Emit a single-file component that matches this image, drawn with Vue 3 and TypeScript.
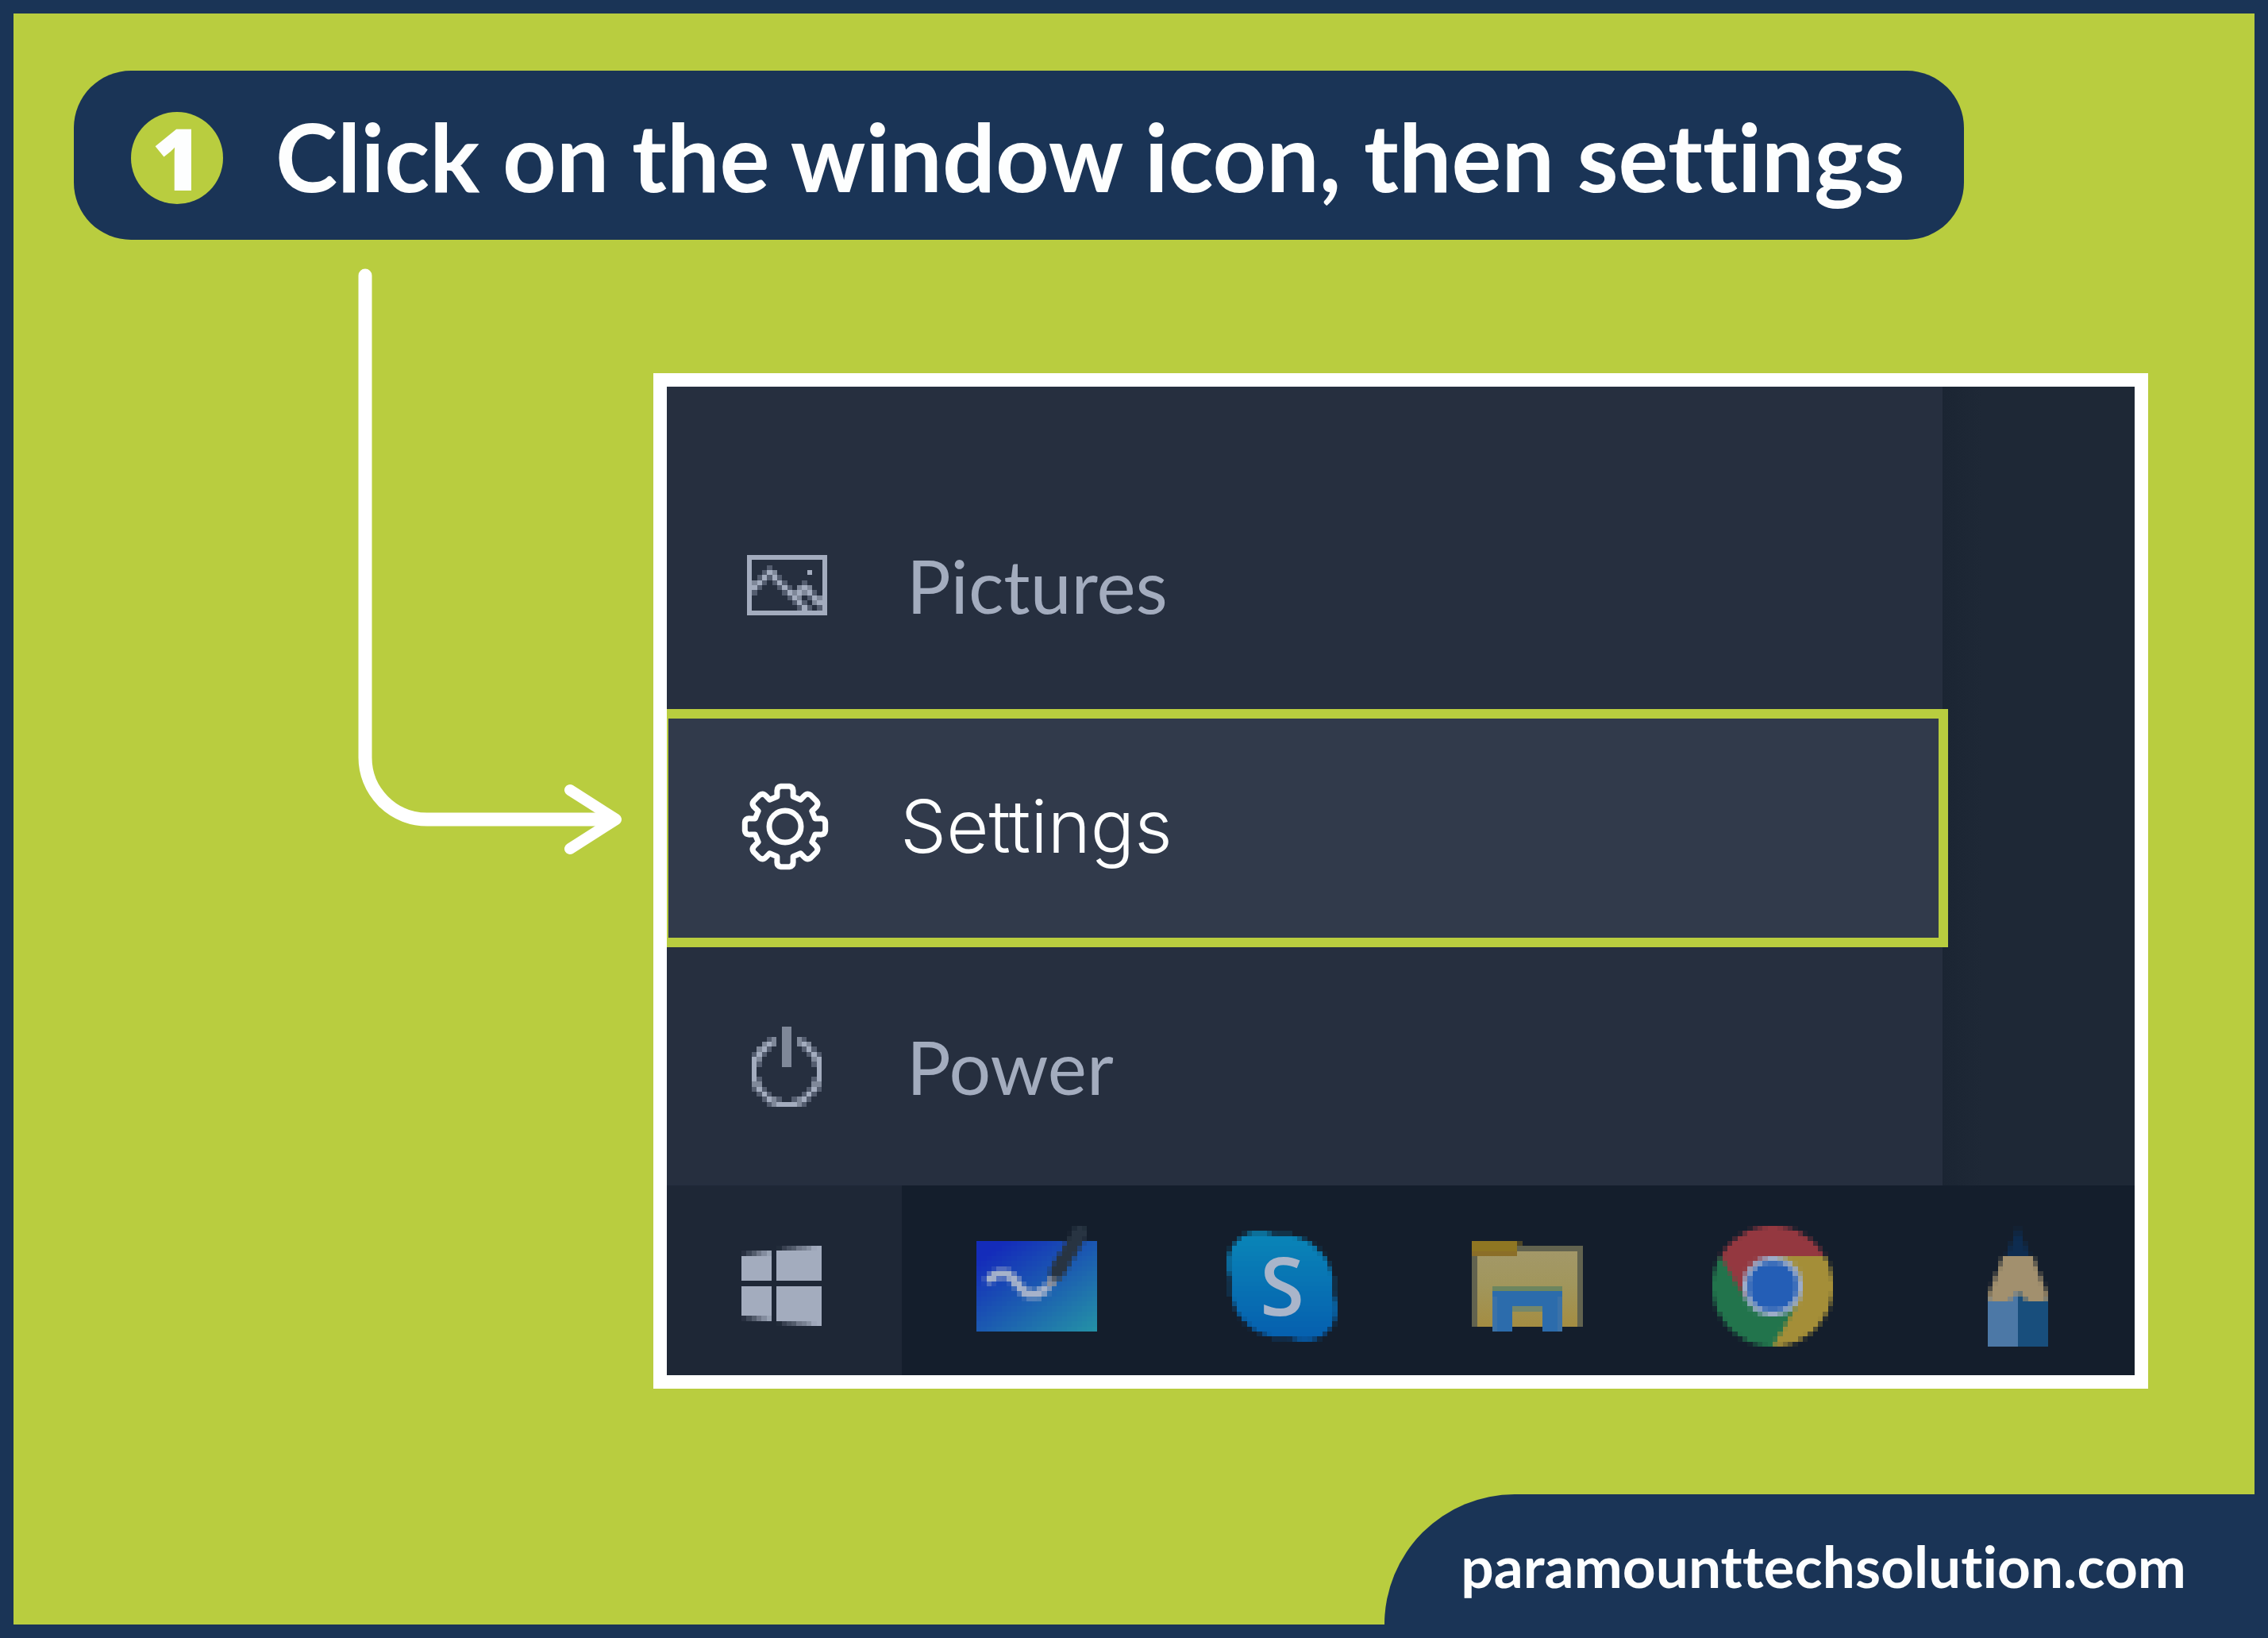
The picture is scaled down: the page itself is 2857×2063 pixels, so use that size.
<script setup lang="ts">
type Rgb = [number, number, number]
type Point = [number, number]
interface Cell { x: number; y: number; fill: string }

/* Turns rows of digits into cells; 3 is the full tone, 1 the faintest. */
function fromRows(rows: string[]): Cell[] {
  const tones: Record<string, string> = { '1': '#545d6f', '2': '#7f8899', '3': '#a3acbe' }
  return rows.flatMap((row, y) =>
    [...row].flatMap((tone, x) => (tones[tone] ? [{ x, y, fill: tones[tone] }] : [])),
  )
}

/* Samples a shape onto a coarse grid, so edges fade as in a small bitmap icon. */
function rasterize(size: number, paint: (x: number, y: number) => Rgb | null): Cell[] {
  const cells: Cell[] = []
  const steps = 5
  for (let y = 0; y < size; y++) {
    for (let x = 0; x < size; x++) {
      let hits = 0
      const sum: Rgb = [0, 0, 0]
      for (let j = 0; j < steps; j++) {
        for (let i = 0; i < steps; i++) {
          const c = paint(x + (i + 0.5) / steps, y + (j + 0.5) / steps)
          if (!c) continue
          hits++
          sum[0] += c[0]
          sum[1] += c[1]
          sum[2] += c[2]
        }
      }
      if (!hits) continue
      const [r, g, b] = sum.map((v) => Math.round(v / hits))
      cells.push({ x, y, fill: `rgba(${r}, ${g}, ${b}, ${hits / (steps * steps)})` })
    }
  }
  return cells
}

const mix = (a: Rgb, b: Rgb, t: number): Rgb => [
  a[0] + (b[0] - a[0]) * t,
  a[1] + (b[1] - a[1]) * t,
  a[2] + (b[2] - a[2]) * t,
]

function nearLine(x: number, y: number, points: Point[], width: number): boolean {
  return points.slice(1).some(([bx, by], i) => {
    const [ax, ay] = points[i]
    const dx = bx - ax
    const dy = by - ay
    const t = Math.max(0, Math.min(1, ((x - ax) * dx + (y - ay) * dy) / (dx * dx + dy * dy)))
    return Math.hypot(x - ax - dx * t, y - ay - dy * t) < width / 2
  })
}

const pictures = fromRows([
  '3333333333333333',
  '3..............3',
  '3...1..........3',
  '3..132......3..3',
  '3.13131........3',
  '3231.131...1...3',
  '331...131.232..3',
  '31.....1323231.3',
  '3.......132.1323',
  '3........131.233',
  '3.........131.13',
  '3333333333333333',
])

const power = fromRows([
  '......22......',
  '......22......',
  '...12.22.21...',
  '..232.22.232..',
  '.231..22..131.',
  '131...22...131',
  '32....22....23',
  '31....22....13',
  '3............3',
  '3............3',
  '31..........13',
  '22..........22',
  '131........131',
  '.131......131.',
  '..1321..1231..',
  '...12333321...',
])

const windowsLogo = rasterize(16, (x, y) => {
  if ((x > 6 && x < 7) || (y > 7 && y < 8)) return null
  const edge = x < 6 ? 2 - x / 6 : Math.max(0, 1 - (x - 7) / 8)
  return y > edge && y < 16 - edge ? [163, 172, 190] : null
})

const wave: Point[] = [[2.6, 10.6], [4, 9.6], [6, 9.4], [7.4, 10.6], [9, 12.6], [10.4, 13.6], [12.2, 13.6], [13.8, 12.4]]
const whiteboard = rasterize(24, (x, y) => {
  if (nearLine(x, y, [[16, 9.2], [20.6, 1.4]], 3)) return [40, 52, 66]
  if (nearLine(x, y, [[14.9, 11.2], [15.8, 9.8]], 1.9)) return [138, 142, 154]
  if (nearLine(x, y, wave, 1.8)) return [166, 178, 202]
  if (y < 3 || y > 21) return null
  return mix([20, 44, 186], [36, 146, 166], Math.max(0, (x + (y - 3) * 1.4 - 6) / 43))
})

const skype = rasterize(24, (x, y) => {
  const inside =
    Math.hypot(x - 12, y - 12) < 10.3 ||
    Math.hypot(x - 7.5, y - 7.5) < 6.4 ||
    Math.hypot(x - 16.5, y - 16.5) < 6.4
  return inside ? mix([10, 136, 184], [5, 92, 174], y / 24) : null
})

const chrome = rasterize(24, (px, py) => {
  const x = px - 12
  const y = py - 12
  const r = Math.hypot(x, y)
  if (r > 12) return null
  if (r < 4.9) return [36, 94, 182]
  if (r < 6) return [156, 172, 200]
  const turn = Math.PI * 2
  const angle = (Math.atan2(x, -y) - Math.acos(6 / r) + turn * 2) % turn
  if (angle < turn / 3) return [164, 142, 56]
  return angle < (turn * 2) / 3 ? [34, 116, 76] : [148, 56, 64]
})

const pencil = rasterize(24, (x, y) => {
  const off = Math.abs(x - 12)
  if (off > 6) return null
  if (y < 6) return off < (y / 6) * 2.4 ? [14, 44, 80] : null
  const hem = off < 2 ? 13.2 + off * 0.9 : 15 - Math.max(0, off - 5) * 0.5
  if (y > hem) return x < 12 ? [76, 120, 166] : [24, 78, 124]
  return off < 3 + (y - 6) / 2.7 ? [162, 144, 110] : null
})

const apps = [
  { name: 'Whiteboard', cells: whiteboard },
  { name: 'Skype', cells: skype },
  { name: 'File Explorer', cells: [] as Cell[] },
  { name: 'Chrome', cells: chrome },
  { name: 'Pencil', cells: pencil },
]

/* Outline of the cog: eight rounded teeth around the centre. */
const cog = (() => {
  const at = (r: number, deg: number) => {
    const a = (deg * Math.PI) / 180
    return `${(55 + r * Math.sin(a)).toFixed(1)} ${(55 - r * Math.cos(a)).toFixed(1)}`
  }
  const parts: string[] = []
  for (let k = 0; k < 8; k++) {
    const d = k * 45
    parts.push(
      `${k ? 'L' : 'M'}${at(39, d - 15)} L${at(45, d - 13)} Q${at(51, d - 12)} ${at(51, d - 6)}`,
      `L${at(51, d + 6)} Q${at(51, d + 12)} ${at(45, d + 13)} L${at(39, d + 15)}`,
    )
  }
  return parts.join(' ') + ' Z'
})()
</script>

<template>
  <div class="page">
    <header class="banner">
      <span class="step">1</span>
      <h1 class="title">Click on the window icon, then settings</h1>
    </header>

    <main class="body">
      <div class="pointer">
        <svg class="arrow" viewBox="0 0 340 750" aria-hidden="true">
          <path d="M12 19 V626 A78 78 0 0 0 90 704 H324" stroke-width="17" />
          <path d="M270 667 L328 704 L270 741" stroke-width="14" />
        </svg>
      </div>

      <section class="screen">
        <div class="desktop">
          <nav class="menu">
            <button class="item" type="button">
              <span class="slot">
                <svg class="pictures" viewBox="0 0 16 12" shape-rendering="crispEdges" aria-hidden="true">
                  <rect v-for="c in pictures" :key="`${c.x}-${c.y}`" :x="c.x" :y="c.y" width="1" height="1" :fill="c.fill" />
                </svg>
              </span>
              <span>Pictures</span>
            </button>
            <button class="item active" type="button">
              <span class="slot">
                <svg class="cog" viewBox="0 0 110 110" aria-hidden="true">
                  <path :d="cog" />
                  <circle cx="55" cy="55" r="20" />
                </svg>
              </span>
              <span>Settings</span>
            </button>
            <button class="item" type="button">
              <span class="slot">
                <svg class="power" viewBox="0 0 14 16" shape-rendering="crispEdges" aria-hidden="true">
                  <rect v-for="c in power" :key="`${c.x}-${c.y}`" :x="c.x" :y="c.y" width="1" height="1" :fill="c.fill" />
                </svg>
              </span>
              <span>Power</span>
            </button>
          </nav>
          <div class="backdrop"></div>
        </div>

        <div class="taskbar">
          <button class="start" type="button" aria-label="Start">
            <svg class="windows" viewBox="0 0 16 16" shape-rendering="crispEdges" aria-hidden="true">
              <rect v-for="c in windowsLogo" :key="`${c.x}-${c.y}`" :x="c.x" :y="c.y" width="1" height="1" :fill="c.fill" />
            </svg>
          </button>
          <div class="apps">
            <button v-for="app in apps" :key="app.name" class="app" type="button" :aria-label="app.name">
              <svg class="glyph" viewBox="0 0 24 24" shape-rendering="crispEdges" aria-hidden="true">
                <rect v-for="c in app.cells" :key="`${c.x}-${c.y}`" :x="c.x" :y="c.y" width="1" height="1" :fill="c.fill" />
                <text v-if="app.name === 'Skype'" class="letter" x="12" y="17.8" text-anchor="middle">S</text>
                <template v-if="app.name === 'File Explorer'">
                  <defs>
                    <linearGradient id="paper" x1="0" y1="0" x2="0" y2="1">
                      <stop offset="0" stop-color="#a39868" />
                      <stop offset="0.45" stop-color="#a1965c" />
                      <stop offset="1" stop-color="#a48d42" />
                    </linearGradient>
                  </defs>
                  <rect x="1" y="4" width="22" height="16" fill="#62634f" />
                  <rect x="2" y="5" width="20" height="15" fill="url(#paper)" />
                  <rect x="10" y="3" width="1" height="1" fill="#4d4526" />
                  <rect x="1" y="3" width="9" height="2" fill="#8f7622" />
                  <rect x="1" y="5" width="9" height="1" fill="#8b6e28" />
                  <rect x="5" y="12" width="14" height="1" fill="#6d865f" />
                  <path d="M5 13 H19 V21 H15 V17 H9 V21 H5 Z" fill="#2c6cac" />
                  <path d="M5 14 H6 V21 H5 Z M18 14 H19 V21 H18 Z" fill="#3b72a8" />
                  <rect x="9" y="16" width="6" height="1" fill="#75876a" />
                </template>
              </svg>
            </button>
          </div>
        </div>
      </section>
    </main>

    <footer class="site">
      <a class="link" href="#">paramounttechsolution.com</a>
    </footer>
  </div>
</template>

<style>
body {
  margin: 0;
}
</style>

<style scoped>
.page {
  box-sizing: border-box;
  min-height: 100vh;
  display: flex;
  flex-direction: column;
  align-items: flex-start;
  border: 17px solid #1a3456;
  background: #b9cd3f;
  font-family: Lato, sans-serif;
  font-variant-ligatures: none;
  color: #fdfefe;
}

.banner {
  display: flex;
  align-items: flex-start;
  gap: 66px;
  box-sizing: border-box;
  height: 213px;
  margin: 72px 0 0 76px;
  padding: 52px 74px 0 72px;
  border-radius: 72px;
  background: #1a3456;
}

.step {
  width: 116px;
  height: 116px;
  flex: none;
  border-radius: 50%;
  background: #b9cd3f;
  font-family: "Open Sans", sans-serif;
  font-size: 108px;
  font-weight: 800;
  line-height: 116px;
  text-align: center;
}

.title {
  margin: 0;
  font-size: 118px;
  font-weight: 700;
  line-height: 112px;
  white-space: nowrap;
}

.body {
  display: flex;
  align-self: stretch;
  margin-top: 26px;
}

.pointer {
  box-sizing: border-box;
  width: 806px;
  flex: none;
  padding-left: 431px;
}

.arrow {
  display: block;
  width: 340px;
  height: 750px;
  fill: none;
  stroke: #fff;
  stroke-linecap: round;
  stroke-linejoin: round;
}

.screen {
  flex: 1;
  min-width: 0;
  margin: 142px 134px 0 0;
  border: 17px solid #fff;
  background: #141e2c;
}

.desktop {
  display: flex;
  background: #1e2836;
}

.menu {
  flex: 1;
  display: flex;
  flex-direction: column;
  padding-top: 100px;
  background: #262f3f;
}

.item {
  box-sizing: border-box;
  display: flex;
  align-items: center;
  gap: 96px;
  height: 300px;
  padding: 0 0 0 96px;
  border: 0;
  background: none;
  color: #a3acbe;
  font-family: Lato, sans-serif;
  font-size: 93px;
  line-height: 120px;
  text-align: left;
}

.item.active {
  position: relative;
  gap: 90px;
  margin: 6px -7px 0 0;
  padding: 0 0 4px 92px;
  border: 12px solid #b9cd3f;
  border-left-width: 2px;
  background: #313a4b;
  color: #fdfefe;
  font-family: Inter, sans-serif;
  font-size: 92px;
  font-weight: 300;
}

.slot {
  display: flex;
  justify-content: center;
  width: 110px;
  flex: none;
}

.pictures {
  width: 101px;
  height: 76px;
}

.cog {
  width: 110px;
  height: 110px;
  fill: none;
  stroke: #fdfefe;
  stroke-width: 7;
  stroke-linejoin: round;
}

.power {
  width: 88px;
  height: 101px;
}

.backdrop {
  width: 242px;
  flex: none;
  background: linear-gradient(90deg, #1b2533, #1e2836 50px);
}

.taskbar {
  display: flex;
  height: 239px;
  overflow: hidden;
}

.start {
  display: flex;
  align-items: center;
  justify-content: center;
  box-sizing: border-box;
  width: 296px;
  flex: none;
  padding: 14px 8px 0 0;
  border: 0;
  background: #1e2736;
}

.windows {
  width: 101px;
  height: 101px;
}

.apps {
  display: flex;
  margin-left: 15px;
}

.app {
  display: flex;
  align-items: center;
  justify-content: center;
  width: 309px;
  flex: none;
  padding: 14px 0 0;
  border: 0;
  background: none;
}

.glyph {
  width: 152px;
  height: 152px;
}

.letter {
  font-family: "Open Sans", sans-serif;
  font-size: 16px;
  font-weight: 600;
  fill: #a9b5ca;
}

.site {
  display: flex;
  align-items: center;
  align-self: flex-end;
  box-sizing: border-box;
  height: 164px;
  margin-top: auto;
  padding: 16px 86px 0 96px;
  border-top-left-radius: 164px;
  background: #1a3456;
}

.link {
  color: #fdfefe;
  font-size: 73px;
  font-weight: 700;
  line-height: 96px;
  text-decoration: none;
}
</style>
